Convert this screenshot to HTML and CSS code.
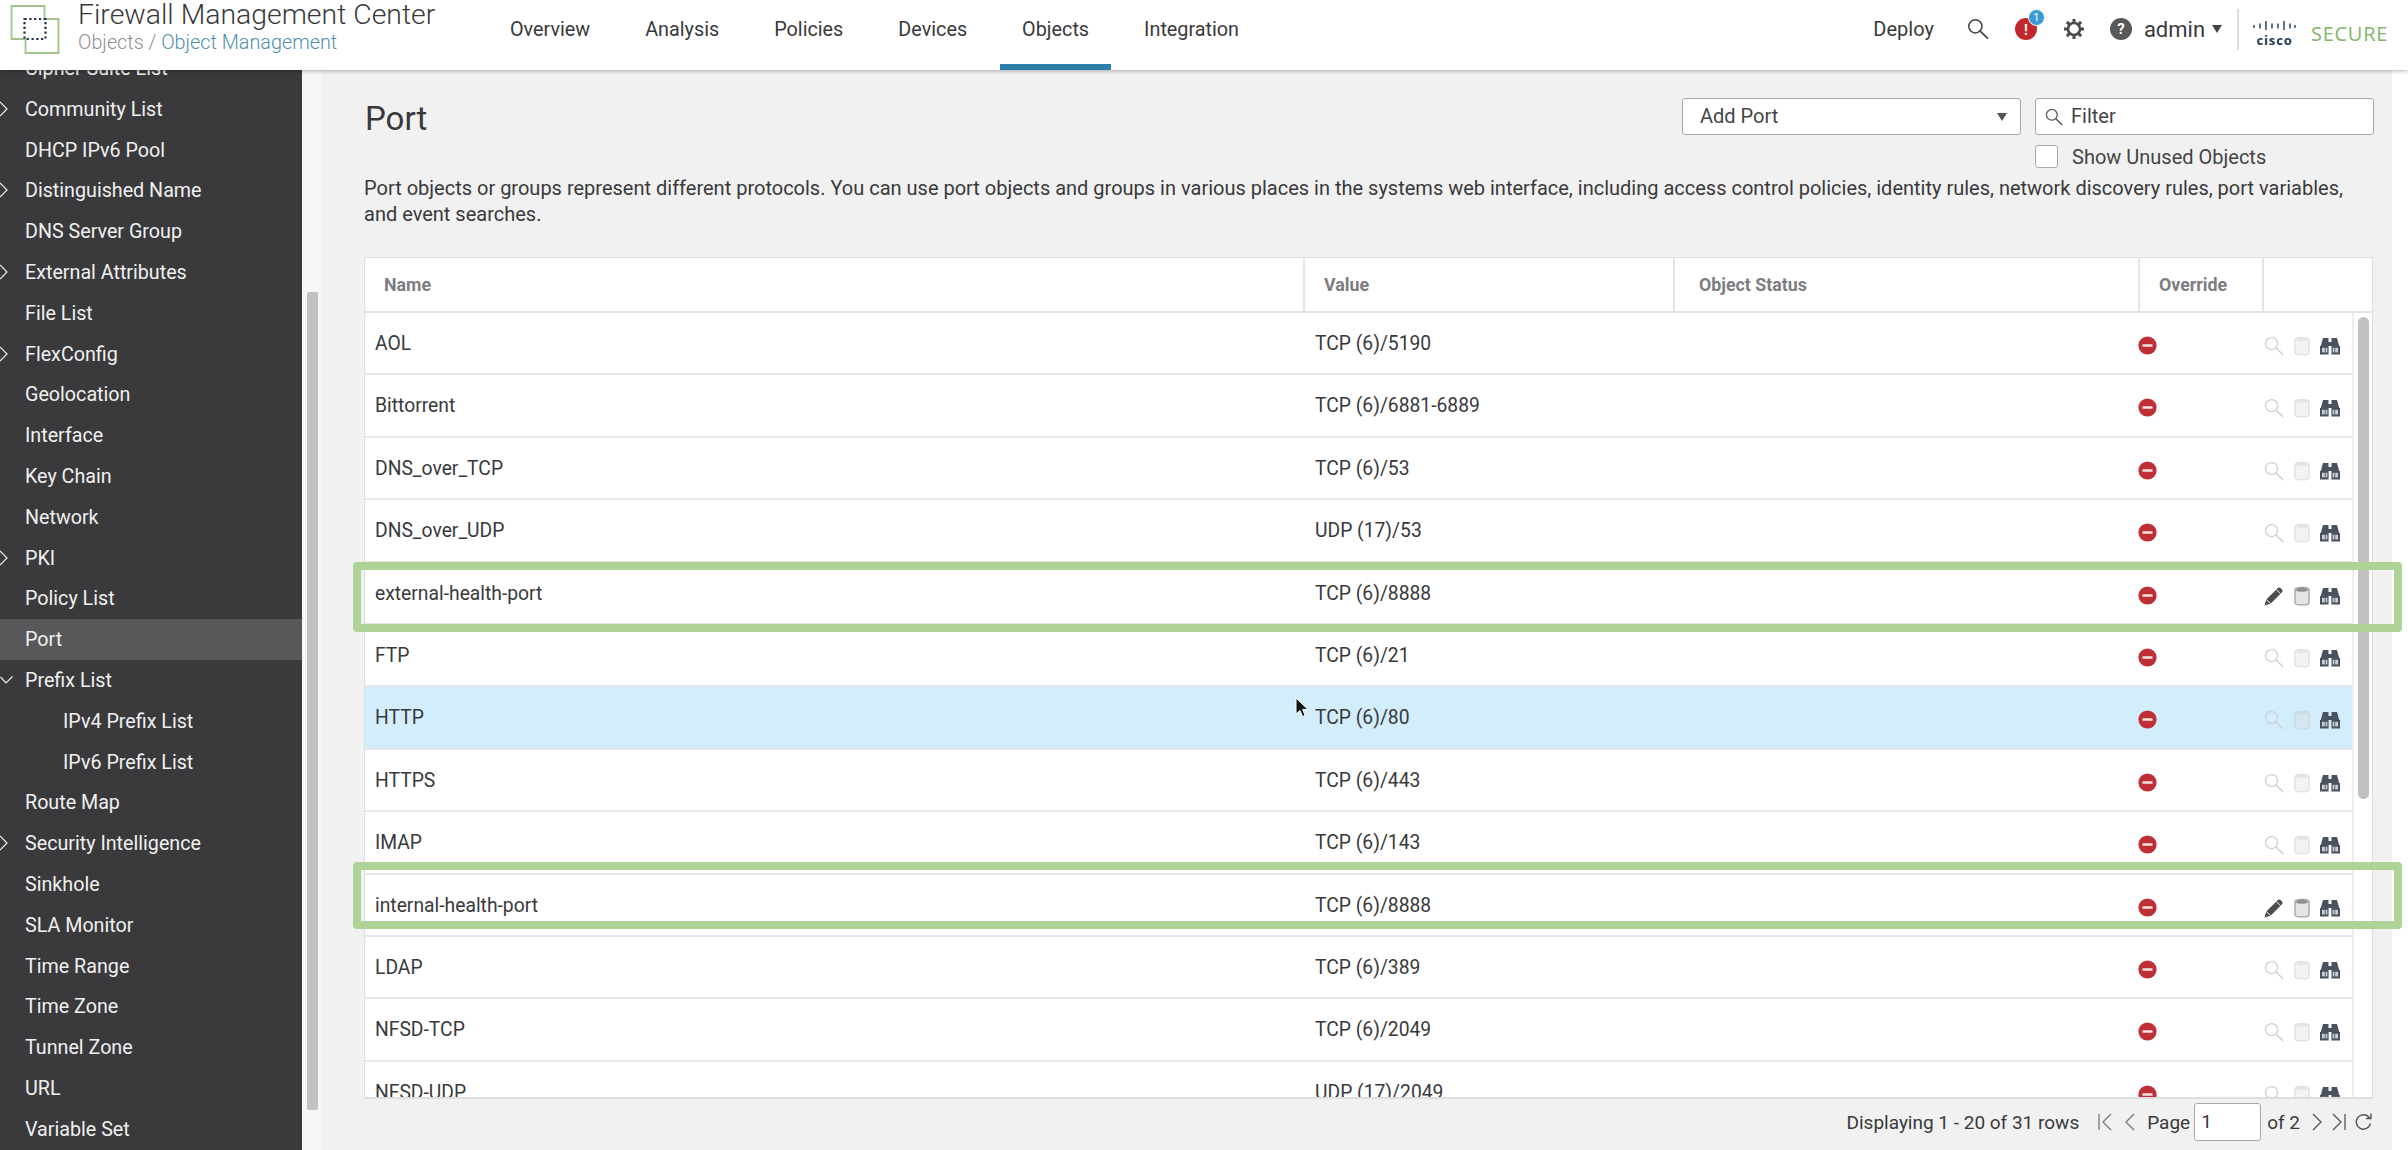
FILE: index.html
```html
<!DOCTYPE html>
<html lang="en">
<head>
<meta charset="utf-8">
<title>Port - Firewall Management Center</title>
<link rel="stylesheet" href="styles.css">
</head>
<body>
<svg class="defs" width="0" height="0">
  <symbol id="i-minus" viewBox="0 0 20 20"><circle cx="10" cy="10" r="9.6" fill="#bf2f35"/><rect x="4.6" y="8.6" width="10.8" height="2.8" rx="1" fill="#f6e4e4"/></symbol>
  <symbol id="i-search" viewBox="0 0 20 20"><circle cx="7.6" cy="7.6" r="6" fill="none" stroke="currentColor" stroke-width="1.4"/><path d="M12 12l6.6 6.4" fill="none" stroke="currentColor" stroke-width="1.6" stroke-linecap="round"/></symbol>
  <symbol id="i-trash" viewBox="0 0 16 20"><path d="M1 3.500C1 .6 15 .6 15 3.500V17C15 19.600 1 19.600 1 17Z" fill="#d8d8d8" fill-opacity=".3" stroke="#c4c4c4" stroke-opacity=".45" stroke-width="1.300"/><ellipse cx="8" cy="3.600" rx="6" ry="1.600" fill="#c8c8c8" fill-opacity=".3"/></symbol>
  <symbol id="i-trash-on" viewBox="0 0 16 20"><path d="M1 3.500C1 .6 15 .6 15 3.500V17C15 19.600 1 19.600 1 17Z" fill="#e4e4e4" stroke="#a0a0a0" stroke-width="1.300"/><ellipse cx="8" cy="3.800" rx="6.200" ry="2" fill="#8f8f8f"/></symbol>
  <symbol id="i-bino" viewBox="0 0 20 18"><path d="M3 1h5.500v4h3V1H17l2.200 8H20v8.500h-8.600V9h-2.800v8.500H0V9h.8z" fill="#4a5260"/><rect x="2" y="10.800" width="2.800" height="4.600" fill="#c9ced6"/><rect x="5.600" y="10.800" width="1.800" height="4.600" fill="#c9ced6"/><rect x="12.600" y="10.800" width="1.800" height="4.600" fill="#c9ced6"/><rect x="15.200" y="10.800" width="2.800" height="4.600" fill="#c9ced6"/></symbol>
  <symbol id="i-pencil" viewBox="0 0 20 20"><path d="M0.500 19.500l1.800-6L13.600 2.200c1-1 2.200-1 3.200 0l1 1c1 1 1 2.200 0 3.200L6.500 17.700z" fill="#4c4c4e"/><path d="M2.300 13.500l4.200 4.200" stroke="#fff" stroke-width="1"/><path d="M12.300 3.500l4.200 4.200" stroke="#fff" stroke-width="1"/></symbol>
  <symbol id="i-chev" viewBox="0 0 8 16"><path d="M0 1l7 7-7 7" fill="none" stroke="currentColor" stroke-width="1.200"/></symbol>
</svg>

<header class="topbar">
  <svg class="logo" width="50" height="50" viewBox="0 0 50 50">
    <path d="M1.500 1h33v13h14v34h-33v-14h-14z" fill="none" stroke="#9fc48a" stroke-width="1.800"/>
    <rect x="14.500" y="14" width="21" height="20" fill="none" stroke="#1f2d4d" stroke-width="2.200" stroke-dasharray="2.200 2.600"/>
  </svg>
  <div class="brand">
    <div class="brand-title">Firewall Management Center</div>
    <div class="brand-sub">Objects / <span class="brand-link">Object Management</span></div>
  </div>
  <nav class="nav">
    <a class="nav-item">Overview</a>
    <a class="nav-item">Analysis</a>
    <a class="nav-item">Policies</a>
    <a class="nav-item">Devices</a>
    <a class="nav-item nav-active">Objects</a>
    <a class="nav-item">Integration</a>
  </nav>
  <div class="tools">
    <span class="deploy">Deploy</span>
    <svg class="tool-search" width="22" height="22" viewBox="0 0 20 20" color="#444"><use href="#i-search"/></svg>
    <span class="alert">!<span class="alert-badge">1</span></span>
    <svg class="gear" width="22" height="22" viewBox="0 0 22 22"><circle cx="11" cy="11" r="6" fill="none" stroke="#4a4a4c" stroke-width="2.600"/><path d="M11 1v4M11 17v4M1 11h4M17 11h4M3.900 3.900l2.800 2.800M15.300 15.300l2.800 2.800M18.100 3.900l-2.800 2.800M6.700 15.300l-2.800 2.800" stroke="#4a4a4c" stroke-width="3"/></svg>
    <span class="help">?</span>
    <span class="admin">admin</span>
    <span class="caret"></span>
    <span class="tools-sep"></span>
    <div class="cisco">
      <svg width="43" height="10" viewBox="0 0 43 10"><path d="M1 4v3M7 2.500v5M13 0v9M19 2.500v5M25 2.500v5M31 0v9M37 2.500v5M42 4v3" stroke="#1f3a57" stroke-width="1.400"/></svg>
      <span class="cisco-word">cisco</span>
    </div>
    <span class="secure">SECURE</span>
  </div>
</header>

<div class="body">
  <aside class="side">
    <ul class="side-list">
      <li class="side-item">Cipher Suite List</li>
      <li class="side-item"><svg class="chev"><use href="#i-chev"/></svg>Community List</li>
      <li class="side-item">DHCP IPv6 Pool</li>
      <li class="side-item"><svg class="chev"><use href="#i-chev"/></svg>Distinguished Name</li>
      <li class="side-item">DNS Server Group</li>
      <li class="side-item"><svg class="chev"><use href="#i-chev"/></svg>External Attributes</li>
      <li class="side-item">File List</li>
      <li class="side-item"><svg class="chev"><use href="#i-chev"/></svg>FlexConfig</li>
      <li class="side-item">Geolocation</li>
      <li class="side-item">Interface</li>
      <li class="side-item">Key Chain</li>
      <li class="side-item">Network</li>
      <li class="side-item"><svg class="chev"><use href="#i-chev"/></svg>PKI</li>
      <li class="side-item">Policy List</li>
      <li class="side-item side-active">Port</li>
      <li class="side-item"><svg class="chev-open" width="13" height="8" viewBox="0 0 13 8"><path d="M0.500 1l5.500 6 6.500-6.500" fill="none" stroke="#eee" stroke-width="1.200"/></svg>Prefix List</li>
      <li class="side-item side-sub">IPv4 Prefix List</li>
      <li class="side-item side-sub">IPv6 Prefix List</li>
      <li class="side-item">Route Map</li>
      <li class="side-item"><svg class="chev"><use href="#i-chev"/></svg>Security Intelligence</li>
      <li class="side-item">Sinkhole</li>
      <li class="side-item">SLA Monitor</li>
      <li class="side-item">Time Range</li>
      <li class="side-item">Time Zone</li>
      <li class="side-item">Tunnel Zone</li>
      <li class="side-item">URL</li>
      <li class="side-item">Variable Set</li>
    </ul>
  </aside>
  <div class="side-scroll"><div class="side-thumb"></div></div>

  <main class="main">
    <div class="page-head">
      <h1 class="page-title">Port</h1>
      <div class="controls">
        <div class="select">Add Port<span class="select-caret"></span></div>
        <div class="filter"><svg width="18" height="18" viewBox="0 0 20 20" color="#555"><use href="#i-search"/></svg>Filter</div>
        <span></span>
        <label class="unused"><span class="checkbox"></span>Show Unused Objects</label>
      </div>
    </div>
    <p class="desc">Port objects or groups represent different protocols. You can use port objects and groups in various places in the systems web interface, including access control policies, identity rules, network discovery rules, port variables, and event searches.</p>

    <section class="table">
      <div class="thead">
        <div class="th">Name</div>
        <div class="th">Value</div>
        <div class="th th-status">Object Status</div>
        <div class="th">Override</div>
        <div class="th"></div>
      </div>
      <div class="tbody">
        <div class="rows">
          <div class="row"><div class="cell">AOL</div><div class="cell">TCP (6)/5190</div><div class="cell"></div><div class="acts"><svg class="ic-minus"><use href="#i-minus"/></svg><svg class="ic-search"><use href="#i-search"/></svg><svg class="ic-trash"><use href="#i-trash"/></svg><svg class="ic-bino"><use href="#i-bino"/></svg></div></div>
          <div class="row"><div class="cell">Bittorrent</div><div class="cell">TCP (6)/6881-6889</div><div class="cell"></div><div class="acts"><svg class="ic-minus"><use href="#i-minus"/></svg><svg class="ic-search"><use href="#i-search"/></svg><svg class="ic-trash"><use href="#i-trash"/></svg><svg class="ic-bino"><use href="#i-bino"/></svg></div></div>
          <div class="row"><div class="cell">DNS_over_TCP</div><div class="cell">TCP (6)/53</div><div class="cell"></div><div class="acts"><svg class="ic-minus"><use href="#i-minus"/></svg><svg class="ic-search"><use href="#i-search"/></svg><svg class="ic-trash"><use href="#i-trash"/></svg><svg class="ic-bino"><use href="#i-bino"/></svg></div></div>
          <div class="row"><div class="cell">DNS_over_UDP</div><div class="cell">UDP (17)/53</div><div class="cell"></div><div class="acts"><svg class="ic-minus"><use href="#i-minus"/></svg><svg class="ic-search"><use href="#i-search"/></svg><svg class="ic-trash"><use href="#i-trash"/></svg><svg class="ic-bino"><use href="#i-bino"/></svg></div></div>
          <div class="row"><div class="cell">external-health-port</div><div class="cell">TCP (6)/8888</div><div class="cell"></div><div class="acts"><svg class="ic-minus"><use href="#i-minus"/></svg><svg class="ic-search"><use href="#i-pencil"/></svg><svg class="ic-trash"><use href="#i-trash-on"/></svg><svg class="ic-bino"><use href="#i-bino"/></svg></div></div>
          <div class="row"><div class="cell">FTP</div><div class="cell">TCP (6)/21</div><div class="cell"></div><div class="acts"><svg class="ic-minus"><use href="#i-minus"/></svg><svg class="ic-search"><use href="#i-search"/></svg><svg class="ic-trash"><use href="#i-trash"/></svg><svg class="ic-bino"><use href="#i-bino"/></svg></div></div>
          <div class="row row-hover"><div class="cell">HTTP</div><div class="cell">TCP (6)/80</div><div class="cell"></div><div class="acts"><svg class="ic-minus"><use href="#i-minus"/></svg><svg class="ic-search"><use href="#i-search"/></svg><svg class="ic-trash"><use href="#i-trash"/></svg><svg class="ic-bino"><use href="#i-bino"/></svg></div></div>
          <div class="row"><div class="cell">HTTPS</div><div class="cell">TCP (6)/443</div><div class="cell"></div><div class="acts"><svg class="ic-minus"><use href="#i-minus"/></svg><svg class="ic-search"><use href="#i-search"/></svg><svg class="ic-trash"><use href="#i-trash"/></svg><svg class="ic-bino"><use href="#i-bino"/></svg></div></div>
          <div class="row"><div class="cell">IMAP</div><div class="cell">TCP (6)/143</div><div class="cell"></div><div class="acts"><svg class="ic-minus"><use href="#i-minus"/></svg><svg class="ic-search"><use href="#i-search"/></svg><svg class="ic-trash"><use href="#i-trash"/></svg><svg class="ic-bino"><use href="#i-bino"/></svg></div></div>
          <div class="row"><div class="cell">internal-health-port</div><div class="cell">TCP (6)/8888</div><div class="cell"></div><div class="acts"><svg class="ic-minus"><use href="#i-minus"/></svg><svg class="ic-search"><use href="#i-pencil"/></svg><svg class="ic-trash"><use href="#i-trash-on"/></svg><svg class="ic-bino"><use href="#i-bino"/></svg></div></div>
          <div class="row"><div class="cell">LDAP</div><div class="cell">TCP (6)/389</div><div class="cell"></div><div class="acts"><svg class="ic-minus"><use href="#i-minus"/></svg><svg class="ic-search"><use href="#i-search"/></svg><svg class="ic-trash"><use href="#i-trash"/></svg><svg class="ic-bino"><use href="#i-bino"/></svg></div></div>
          <div class="row"><div class="cell">NFSD-TCP</div><div class="cell">TCP (6)/2049</div><div class="cell"></div><div class="acts"><svg class="ic-minus"><use href="#i-minus"/></svg><svg class="ic-search"><use href="#i-search"/></svg><svg class="ic-trash"><use href="#i-trash"/></svg><svg class="ic-bino"><use href="#i-bino"/></svg></div></div>
          <div class="row"><div class="cell">NFSD-UDP</div><div class="cell">UDP (17)/2049</div><div class="cell"></div><div class="acts"><svg class="ic-minus"><use href="#i-minus"/></svg><svg class="ic-search"><use href="#i-search"/></svg><svg class="ic-trash"><use href="#i-trash"/></svg><svg class="ic-bino"><use href="#i-bino"/></svg></div></div>
        </div>
        <div class="tscroll"><div class="tthumb"></div></div>
      </div>
    </section>

    <footer class="pager">
      <span class="pager-count">Displaying 1 - 20 of 31 rows</span>
      <svg class="pg-first" width="14" height="20" viewBox="0 0 14 20"><path d="M1 2v16M13 2l-8 8 8 8" fill="none" stroke="#777" stroke-width="1.300"/></svg>
      <svg class="pg-prev" width="10" height="20" viewBox="0 0 10 20"><path d="M9 2l-8 8 8 8" fill="none" stroke="#777" stroke-width="1.300"/></svg>
      <span class="pager-page">Page</span>
      <span class="pager-input">1</span>
      <span class="pager-of">of 2</span>
      <svg class="pg-next" width="10" height="20" viewBox="0 0 10 20"><path d="M1 2l8 8-8 8" fill="none" stroke="#555" stroke-width="1.300"/></svg>
      <svg class="pg-last" width="14" height="20" viewBox="0 0 14 20"><path d="M1 2l8 8-8 8M13 2v16" fill="none" stroke="#555" stroke-width="1.300"/></svg>
      <svg class="pg-refresh" width="20" height="20" viewBox="0 0 18 20"><path d="M15.500 6A7.200 7.200 0 1 0 16.500 11.500" fill="none" stroke="#555" stroke-width="1.400"/><path d="M12 6.500h5v-5" fill="none" stroke="#555" stroke-width="1.400"/></svg>
    </footer>
  </main>
  <div class="edge"></div>
</div>

<div class="mark mark-a"></div>
<div class="mark mark-b"></div>
<svg class="pointer" width="16" height="22" viewBox="0 0 16 22"><path d="M1 1v16l4-3.500 2.600 6 2.600-1-2.600-6H13z" fill="#111" stroke="#fff" stroke-width="1"/></svg>
</body>
</html>
```

FILE: styles.css
```css
* { box-sizing: border-box; }
html, body { margin: 0; height: 100%; }
body {
  width: 2408px;
  height: 1150px;
  overflow: hidden;
  display: flex;
  flex-direction: column;
  font-family: Roboto, "Liberation Sans", sans-serif;
  color: #333;
  background: #fff;
  position: relative;
}
.defs { position: absolute; }

/* header */
.topbar {
  height: 70px;
  flex: none;
  display: flex;
  align-items: stretch;
  background: #fff;
  box-shadow: 0 1px 4px rgba(0, 0, 0, .3);
  position: relative;
  z-index: 3;
  padding-left: 10px;
}
.logo { margin-top: 5px; flex: none; }
.brand { margin-left: 18px; width: 410px; flex: none; }
.brand-title { font-size: 28.4px; line-height: 30px; color: #39393b; font-weight: 300; white-space: nowrap; }
.brand-sub { font-size: 19.8px; line-height: 24px; margin-top: 1px; color: #8f8f92; font-weight: 300; }
.brand-link { color: #4f8fae; }
.nav { display: flex; gap: 11px; }
.nav-item {
  padding: 0 22px;
  font-size: 19.8px;
  line-height: 59px;
  color: #39393b;
  height: 70px;
}
.nav-active { border-bottom: 6px solid #2c7fa8; }
.tools { margin-left: auto; display: flex; align-items: center; height: 58px; padding-right: 20px; }
.deploy { font-size: 20px; color: #39393b; }
.tool-search { margin-left: 33px; }
.alert {
  margin-left: 26px;
  width: 22px;
  height: 22px;
  border-radius: 50%;
  background: #c1272d;
  color: #fff;
  font-size: 14px;
  font-weight: 700;
  line-height: 24px;
  text-align: center;
  position: relative;
}
.alert-badge {
  position: absolute;
  right: -8px;
  top: -9px;
  width: 17px;
  height: 17px;
  border-radius: 50%;
  background: #3c9bd6;
  border: 1px solid #fff;
  font-size: 11px;
  font-weight: 400;
  line-height: 15px;
}
.gear { margin-left: 26px; }
.help {
  margin-left: 25px;
  width: 22px;
  height: 22px;
  border-radius: 50%;
  background: #58585a;
  color: #fff;
  font-size: 15px;
  font-weight: 700;
  line-height: 22px;
  text-align: center;
}
.admin { margin-left: 12px; font-size: 22px; color: #39393b; }
.caret { margin-left: 7px; border-top: 8px solid #444; border-left: 5px solid transparent; border-right: 5px solid transparent; }
.tools-sep { margin-left: 15px; width: 2px; height: 41px; background: #dcdcdc; }
.cisco { margin-left: 14px; display: flex; flex-direction: column; align-items: center; margin-top: 10px; }
.cisco-word { font-family: "Open Sans", sans-serif; font-weight: 700; font-size: 13px; line-height: 13px; letter-spacing: .9px; color: #1f3a57; margin-top: 3px; }
.secure { margin-left: 15px; font-family: "Open Sans", sans-serif; font-size: 20px; letter-spacing: .7px; color: #82b56b; margin-top: 8px; }

/* layout */
.body { flex: 1; min-height: 0; display: flex; }
.side { width: 302px; flex: none; background: #3a3a3c; overflow: hidden; }
.side-list { list-style: none; margin: -22px 0 0; padding: 0; }
.side-item {
  height: 40.8px;
  line-height: 42px;
  padding-left: 25px;
  font-size: 19.7px;
  color: #f0f0f0;
  position: relative;
  white-space: nowrap;
}
.side-active { background: #58585a; }
.side-sub { padding-left: 63px; }
.chev { position: absolute; left: 0; top: 12px; width: 8px; height: 16px; color: #eee; }
.chev-open { position: absolute; left: 0; top: 16px; }
.side-scroll { width: 20px; flex: none; background: #f6f6f6; padding: 222px 4px 40px 5px; }
.side-thumb { height: 100%; background: #c1c1c1; border-radius: 2px; }
.main { flex: 1; min-width: 0; background: #f1f1f1; padding: 28px 19px 0 42px; display: flex; flex-direction: column; }
.edge { width: 16px; flex: none; background: #fff; }

/* page head */
.page-head { display: flex; justify-content: space-between; height: 77px; }
.page-title { margin: 0; font-size: 33px; font-weight: 400; line-height: 42px; color: #39393b; padding-left: 1px; }
.controls { display: grid; grid-template-columns: 339px 339px; column-gap: 14px; row-gap: 10px; grid-template-rows: 37px auto; margin-right: -1px; }
.select, .filter {
  height: 37px;
  background: #fff;
  border: 1px solid #a9a9a9;
  border-radius: 3px;
  font-size: 20px;
  line-height: 35px;
  color: #444;
  display: flex;
  align-items: center;
}
.select { padding-left: 17px; position: relative; }
.select-caret { position: absolute; right: 13px; top: 14px; border-top: 8px solid #555; border-left: 5px solid transparent; border-right: 5px solid transparent; }
.filter { padding-left: 9px; gap: 8px; }
.unused { display: flex; align-items: center; font-size: 20px; color: #444; height: 23px; }
.checkbox { width: 23px; height: 23px; background: #fff; border: 1px solid #a9a9a9; border-radius: 3px; margin-right: 14px; }
.desc { margin: 0 0 30px; font-size: 20px; line-height: 26px; color: #39393b; }

/* table */
.table { flex: 1; min-height: 0; display: flex; flex-direction: column; border: 1px solid #dedede; border-bottom: 0; background: #fff; }
.thead { display: grid; grid-template-columns: 940px 370px 465px 124px 1fr; height: 55px; flex: none; border-bottom: 2px solid #e2e2e2; }
.th { padding-left: 19px; font-size: 17.8px; font-weight: 700; line-height: 53px; color: #7d7d80; border-right: 2px solid #e4e4e4; }
.th-status { padding-left: 24px; }
.th:last-child { border-right: 0; }
.tbody { flex: 1; min-height: 0; display: flex; overflow: hidden; }
.rows { flex: 1; min-width: 0; }
.row { display: grid; grid-template-columns: 940px 370px 465px 1fr; height: 62.4px; border-bottom: 2px solid #e6e6e6; }
.row-hover { background: #d2edfc; }
.cell { padding-left: 10px; font-size: 19.3px; line-height: 61px; color: #39393b; white-space: nowrap; }
.acts { position: relative; }
.ic-minus { position: absolute; left: -2px; top: 23px; width: 19px; height: 19px; }
.ic-search { position: absolute; left: 124px; top: 23px; width: 20px; height: 20px; color: #d2d2d2; }
.ic-trash { position: absolute; left: 154px; top: 23px; width: 16px; height: 20px; }
.ic-bino { position: absolute; left: 180px; top: 24px; width: 20px; height: 18px; }
.tscroll { width: 20px; flex: none; background: #fff; border-left: 2px solid #eee; padding: 4px 3px 0 4px; }
.tthumb { height: 482px; background: #c0c0c0; border-radius: 6px; }

/* footer */
.pager {
  height: 53px;
  flex: none;
  display: flex;
  align-items: center;
  justify-content: flex-end;
  border-top: 2px solid #dedede;
  padding-bottom: 5px;
  font-size: 19px;
  color: #39393b;
}
.pg-first { margin-left: 19px; }
.pg-prev { margin-left: 13px; }
.pager-page { margin-left: 12px; }
.pager-input { margin-left: 4px; width: 67px; height: 38px; border: 1px solid #a9a9a9; border-radius: 3px; background: #fff; padding-left: 6px; line-height: 36px; }
.pager-of { margin-left: 6px; }
.pg-next { margin-left: 12px; }
.pg-last { margin-left: 10px; }
.pg-refresh { margin-left: 7px; }

/* overlays */
.mark { position: absolute; left: 353px; width: 2049px; border: 8px solid #afd396; border-radius: 4px; z-index: 2; }
.mark-a { top: 562px; height: 70px; }
.mark-b { top: 862px; height: 67px; }
.pointer { position: absolute; left: 1295px; top: 697px; z-index: 4; }
```
